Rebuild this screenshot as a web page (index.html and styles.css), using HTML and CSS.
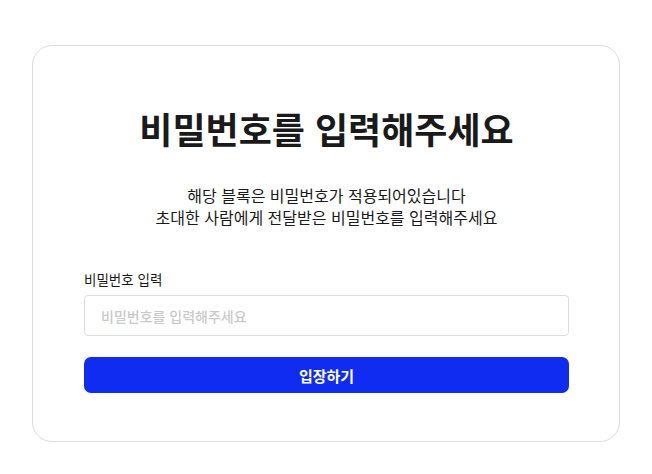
FILE: index.html
```html
<!DOCTYPE html>
<html lang="ko">
<head>
  <meta charset="UTF-8">
  <meta name="viewport" content="width=device-width, initial-scale=1.0">
  <title>비밀번호 입력</title>
  <link rel="stylesheet" href="styles.css">
</head>
<body>
  <div class="card">
    <h1 class="title">비밀번호를 입력해주세요</h1>
    <p class="desc">해당 블록은 비밀번호가 적용되어있습니다<br>초대한 사람에게 전달받은 비밀번호를 입력해주세요</p>
    <form class="form">
      <label class="label" for="pw">비밀번호 입력</label>
      <input id="pw" class="pw-input" type="password" placeholder="비밀번호를 입력해주세요">
      <button class="submit" type="button">입장하기</button>
    </form>
  </div>
</body>
</html>
```

FILE: styles.css
```css
:root {
  --primary: #0f2cf0;
  --text: #1a1a1a;
  --border: #dcdcdc;
}

* {
  box-sizing: border-box;
}

body {
  margin: 0;
  padding: 45px 32px 0;
  font-family: "Noto Sans CJK KR", "Noto Sans", sans-serif;
  color: var(--text);
  background: #fff;
}

.card {
  width: 588px;
  height: 397px;
  border: 1px solid var(--border);
  border-radius: 20px;
  padding: 60px 50px 0 51px;
}

.title {
  margin: 0;
  text-align: center;
  font-size: 36px;
  font-weight: 700;
  line-height: 44px;
}

.desc {
  margin: 34px 0 0;
  text-align: center;
  font-size: 16px;
  line-height: 22px;
}

.form {
  display: flex;
  flex-direction: column;
  margin-top: 42px;
}

.label {
  font-size: 13.5px;
  line-height: 18px;
  margin-bottom: 7px;
}

.pw-input {
  height: 41px;
  border: 1px solid var(--border);
  border-radius: 4px;
  padding: 0 16px;
  font-family: inherit;
  font-size: 14px;
}

.pw-input::placeholder {
  color: #cacaca;
  font-weight: 500;
}

.submit {
  margin-top: 21px;
  height: 36px;
  border: none;
  border-radius: 7px;
  background: var(--primary);
  color: #fff;
  font-family: inherit;
  font-size: 15px;
  font-weight: 700;
}
```
